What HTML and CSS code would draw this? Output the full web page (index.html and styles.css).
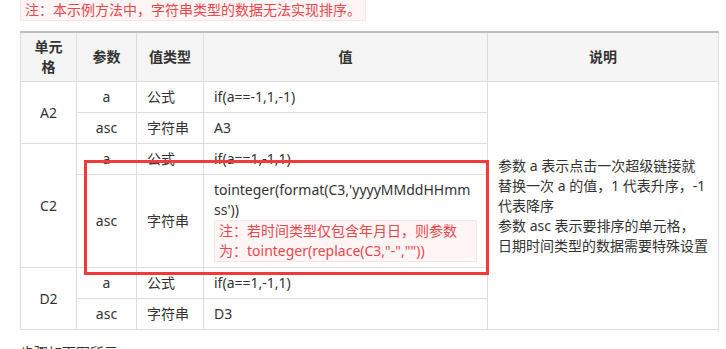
FILE: index.html
```html
<!DOCTYPE html>
<html lang="zh">
<head>
<meta charset="utf-8">
<link rel="stylesheet" href="styles.css">
</head>
<body>
<div class="page">
  <div class="note top-note">注：本示例方法中，字符串类型的数据无法实现排序。</div>
  <div class="table-wrap">
    <table class="params">
      <colgroup>
        <col class="c-cell"><col class="c-param"><col class="c-type"><col class="c-value"><col class="c-desc">
      </colgroup>
      <thead>
        <tr><th>单元格</th><th>参数</th><th>值类型</th><th>值</th><th>说明</th></tr>
      </thead>
      <tbody>
        <tr>
          <td class="center" rowspan="2">A2</td>
          <td class="center">a</td><td>公式</td><td>if(a==-1,1,-1)</td>
          <td class="desc" rowspan="6">参数 a 表示点击一次超级链接就替换一次 a 的值，1 代表升序，-1 代表降序<br>参数 asc 表示要排序的单元格，<br>日期时间类型的数据需要特殊设置</td>
        </tr>
        <tr><td class="center">asc</td><td>字符串</td><td>A3</td></tr>
        <tr>
          <td class="center" rowspan="2">C2</td>
          <td class="center">a</td><td>公式</td><td>if(a==1,-1,1)</td>
        </tr>
        <tr>
          <td class="center">asc</td><td>字符串</td>
          <td>tointeger(format(C3,'yyyyMMddHHmmss'))<div class="note inner-note">注：若时间类型仅包含年月日，则参数为：tointeger(replace(C3,"-",""))</div></td>
        </tr>
        <tr>
          <td class="center" rowspan="2">D2</td>
          <td class="center">a</td><td>公式</td><td>if(a==1,-1,1)</td>
        </tr>
        <tr><td class="center">asc</td><td>字符串</td><td>D3</td></tr>
      </tbody>
    </table>
    <div class="highlight"></div>
  </div>
  <p class="after">步骤如下图所示：</p>
</div>
</body>
</html>
```

FILE: styles.css
```css
html, body {
  margin: 0;
  padding: 0;
  background: #ffffff;
}
body {
  font-family: "Noto Sans", "Noto Sans CJK SC", sans-serif;
  font-size: 14px;
  line-height: 20px;
  color: #333333;
}
.page {
  padding: 0 9px 0 20px;
  margin-top: -1px;
}
.note {
  color: #e8474c;
  background: #fff5f5;
  border: 1px solid #fbe4e4;
}
.top-note {
  display: inline-block;
  padding: 0 4px;
}
.table-wrap {
  position: relative;
  margin-top: 10px;
}
.params {
  border-collapse: collapse;
  table-layout: fixed;
  width: 698px;
  border-top: 2px solid #bdbdbd;
}
.c-cell { width: 56px; }
.c-param { width: 60px; }
.c-type { width: 67px; }
.c-value { width: 284px; }
.c-desc { width: 231px; }
.params th,
.params td {
  border: 1px solid #dddddd;
  padding: 5px 10px;
  text-align: left;
  vertical-align: middle;
  word-break: break-all;
}
.params thead th {
  border-top: 0;
}
.params th {
  background: #f5f5f5;
  font-weight: bold;
  text-align: center;
  padding: 4px 10px;
}
.params td.center {
  text-align: center;
}
.params td.desc {
  padding: 5px 10px;
  word-break: normal;
}
.inner-note {
  padding: 0 4px;
}
.highlight {
  position: absolute;
  left: 64px;
  top: 129px;
  width: 399px;
  height: 109px;
  border: 3px solid #f2393b;
  pointer-events: none;
}
.after {
  margin: 13px 0 0 0;
}
```
